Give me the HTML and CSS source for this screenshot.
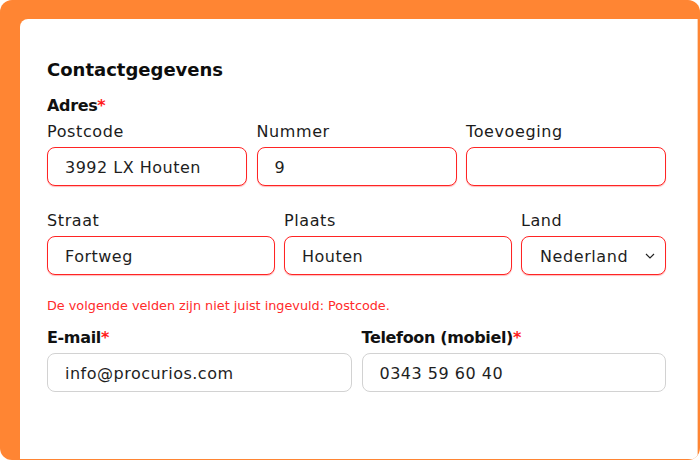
FILE: index.html
```html
<!DOCTYPE html>
<html lang="nl">
<head>
<meta charset="utf-8">
<title>Contactgegevens</title>
<link rel="stylesheet" href="styles.css">
</head>
<body>
<div class="frame">
  <div class="card">
    <h2 class="title">Contactgegevens</h2>
    <div class="group-label">Adres<span class="req">*</span></div>
    <div class="row row-3">
      <label class="field">
        <span class="label">Postcode</span>
        <input class="input invalid" type="text" value="3992 LX Houten">
      </label>
      <label class="field">
        <span class="label">Nummer</span>
        <input class="input invalid" type="text" value="9">
      </label>
      <label class="field">
        <span class="label">Toevoeging</span>
        <input class="input invalid" type="text" value="">
      </label>
    </div>
    <div class="row row-addr">
      <label class="field">
        <span class="label">Straat</span>
        <input class="input invalid" type="text" value="Fortweg">
      </label>
      <label class="field">
        <span class="label">Plaats</span>
        <input class="input invalid" type="text" value="Houten">
      </label>
      <label class="field">
        <span class="label">Land</span>
        <span class="select-wrap">
          <select class="input invalid select">
            <option>Nederland</option>
          </select>
          <svg class="chevron" width="10" height="6" viewBox="0 0 10 6"><polyline points="1,1 5,5 9,1" fill="none" stroke="#222" stroke-width="1.2"/></svg>
        </span>
      </label>
    </div>
    <p class="error">De volgende velden zijn niet juist ingevuld: Postcode.</p>
    <div class="row row-2">
      <label class="field">
        <span class="group-label">E-mail<span class="req">*</span></span>
        <input class="input" type="text" value="info@procurios.com">
      </label>
      <label class="field">
        <span class="group-label">Telefoon (mobiel)<span class="req">*</span></span>
        <input class="input" type="text" value="0343 59 60 40">
      </label>
    </div>
  </div>
</div>
</body>
</html>
```

FILE: styles.css
```css
* { box-sizing: border-box; }
html, body { margin: 0; padding: 0; background: #ffffff; }
body { font-family: "DejaVu Sans", "Noto Sans", sans-serif; color: #1b1b1b; }

.frame {
  width: 700px;
  height: 460px;
  background: #ff8533;
  border-radius: 12px;
  padding: 19px 2px 1px 20px;
  overflow: hidden;
}
.card {
  height: 100%;
  background: #ffffff;
  border-radius: 8px 0 0 0;
  padding: 40px 31px 0 27px;
  border-right: 1px solid #fdd3b5;
}
.title {
  margin: 0 0 15px 0;
  font-size: 18px;
  line-height: 22px;
  font-weight: bold;
  color: #0d0d0d;
  letter-spacing: 0;
}
.group-label {
  display: block;
  font-size: 16px;
  line-height: 20px;
  font-weight: bold;
  color: #111111;
  letter-spacing: -0.35px;
  margin-bottom: 6px;
}
.row-2 .group-label { margin-bottom: 5px; }
.req { color: #ff1a1a; }
.row { display: grid; column-gap: 9.5px; }
.row-3 { grid-template-columns: 1fr 1fr 1fr; }
.row-addr { grid-template-columns: 11fr 11fr 7fr; column-gap: 9px; margin-top: 25px; }
.row-2 { grid-template-columns: 1fr 1fr; column-gap: 10px; margin-top: 14px; }
.field { display: flex; flex-direction: column; min-width: 0; }
.label {
  display: block;
  font-size: 16px;
  line-height: 20px;
  color: #1b1b1b;
  letter-spacing: 0.6px;
  margin-bottom: 5px;
}
.input {
  display: block;
  width: 100%;
  height: 39px;
  margin: 0;
  padding: 1px 10px 0 17px;
  border: 1px solid #d2d2d2;
  border-radius: 8px;
  background: #ffffff;
  font-family: "DejaVu Sans", "Noto Sans", sans-serif;
  font-size: 16px;
  color: #1e1e1e;
  letter-spacing: 0.5px;
  outline: none;
}
.input.invalid {
  border-color: #ff2424;
  box-shadow: 0 1px 1px rgba(255, 60, 60, 0.35);
}
.select-wrap { position: relative; display: block; }
.select {
  -webkit-appearance: none;
  appearance: none;
  padding-left: 18px;
  letter-spacing: 0.6px;
}
.chevron { position: absolute; right: 11px; top: 17px; pointer-events: none; }
.error {
  margin: 23px 0 0 0;
  font-size: 12.8px;
  line-height: 16px;
  color: #ff2b2b;
  letter-spacing: 0;
}
```
